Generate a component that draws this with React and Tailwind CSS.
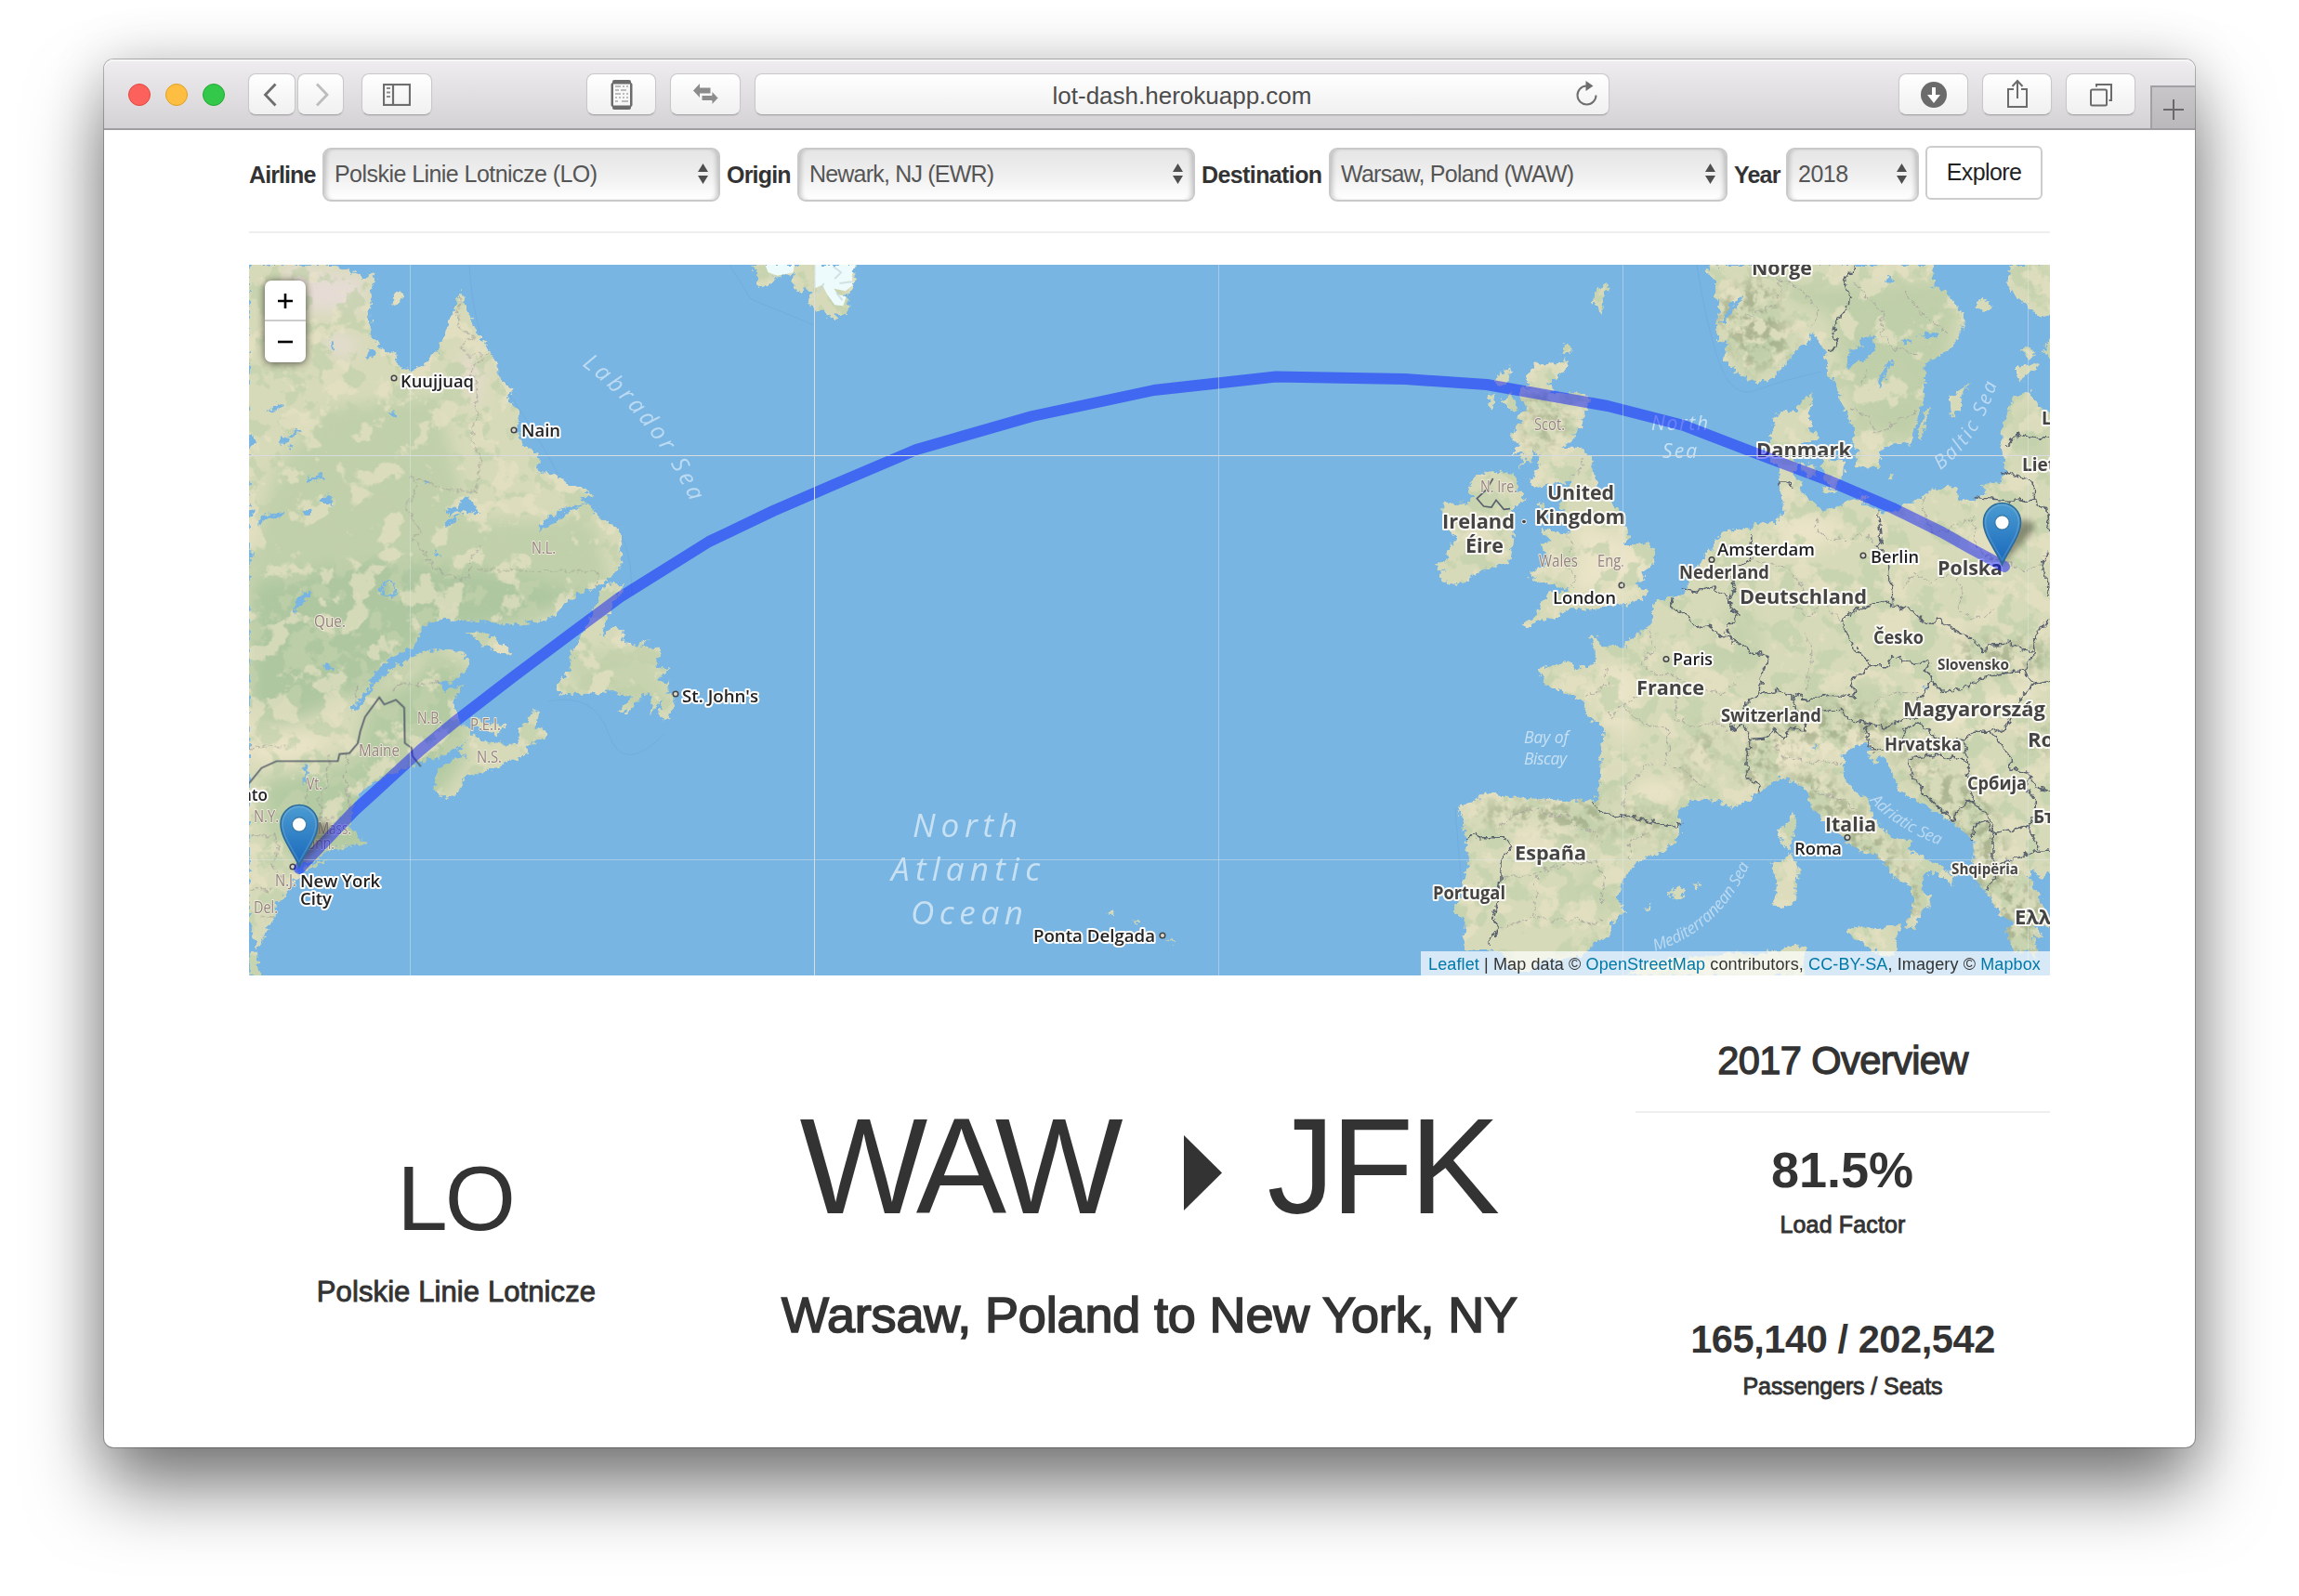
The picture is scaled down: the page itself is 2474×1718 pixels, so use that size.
import React from 'react';

const UI = 'font-["Liberation_Sans",Arial,sans-serif]';

/* ---------- Map geometry ---------- */

// North America, drawn on a 2.8 x 3 grid
const AMERICA = [
  '22,15 275,15 310,30 350,45 375,60 395,45 405,65 390,85 392,120 385,165 390,200 385,240 405,255 415,285 440,295 462,305 468,330 490,350 515,360 540,345 560,330 570,305 590,300 610,250 620,205 640,165 655,115 668,115 680,160 700,210 715,245 735,270 750,300 770,345 772,375 800,400 820,420 800,450 838,490 830,540 840,585 860,605 895,630 895,685 930,690 965,700 985,725 1020,735 1060,755 1020,775 1065,800 1070,830 1100,845 1140,865 1140,940 1150,980 1115,1020 1080,1050 1010,1080 970,1110 960,1130 915,1165 820,1177 730,1168 600,1160 545,1185 520,1245 440,1290 400,1330 385,1380 340,1440 325,1460 355,1450 400,1370 440,1330 500,1290 550,1265 620,1255 665,1265 685,1300 675,1335 630,1365 590,1355 600,1370 612,1392 665,1372 640,1430 650,1465 660,1495 690,1520 720,1550 790,1562 832,1562 835,1520 885,1450 893,1465 885,1510 920,1525 915,1545 860,1570 858,1600 760,1640 715,1658 680,1665 650,1720 612,1740 585,1715 580,1670 600,1640 640,1610 685,1600 645,1590 690,1545 650,1575 600,1605 540,1620 500,1640 440,1660 400,1690 360,1720 335,1760 330,1800 325,1830 345,1850 350,1872 370,1880 363,1855 376,1885 340,1890 310,1895 250,1910 225,1935 170,1955 165,1975 180,1990 160,2000 140,2040 120,2065 100,2080 100,2120 70,2170 50,2222 45,2220 35,2180 22,2120',
  '180,1965 260,1932 250,1950 200,1965',
  '22,2240 45,2240 50,2290 65,2312 22,2312',
  '945,1380 990,1320 995,1270 1010,1240 1040,1180 1065,1120 1080,1070 1100,1045 1160,1050 1130,1085 1115,1130 1090,1180 1085,1215 1125,1180 1150,1200 1145,1230 1190,1245 1230,1220 1200,1250 1260,1250 1265,1270 1245,1310 1290,1320 1260,1350 1280,1375 1295,1355 1280,1400 1310,1400 1290,1480 1260,1480 1265,1420 1230,1470 1240,1400 1215,1400 1160,1460 1135,1460 1180,1410 1120,1395 1060,1400 960,1400',
  '670,1197 740,1205 820,1270 780,1272 730,1245',
  '690,1475 740,1495 800,1500 780,1520 770,1535 700,1500',
  '457,145 462,110 475,100 488,120 475,140',
  '658,95 664,90 662,102',
];
const AMERICA_LAKES = [
  '620,800 650,795 680,760 700,790 718,822 680,815 650,810 620,825',
  '897,872 910,842 970,800 1060,783 1000,805 970,830 900,877',
  '197,705 245,690 242,704 200,718',
  '155,1145 165,1100 190,1075 217,1070 190,1100',
  '238,778 255,760 278,765 268,788 250,785',
  '60,825 90,820 130,812 125,828 70,838 50,855',
  '245,1300 268,1308 275,1330 250,1322',
  '22,570 35,560 45,590 22,598',
  '112,586 120,573 138,576 140,592 126,600',
  '142,602 150,594 158,602 150,611',
  '186,815 205,800 206,820 190,828',
  '190,1625 200,1625 196,1680 190,1690 188,1650',
  '265,262 272,290 280,292 276,262',
  '372,320 385,285 400,300 398,312',
  '550,715 565,708 568,722 552,722',
  '22,800 40,810 30,830 22,825',
  '78,488 100,472 126,462 118,478 90,490',
  '140,570 165,548 186,550 160,564 144,574',
  '448,482 462,498 466,512 452,500',
  '618,850 640,832 662,820 640,846 620,862',
  '575,940 590,945 596,957 582,952',
  '22,940 36,945 34,965 22,960',
];
const GREENLAND = [
  '50,15 80,30 62,48 78,62 70,80 90,90 130,70 122,60 165,50 200,45 188,65 200,95 215,105 230,90 250,110 238,140 262,160 290,165 320,190 335,185 318,170 360,178 370,160 370,130 360,110 385,95 380,75 395,60 385,40 395,15',
];
const ICE = [
  '100,15 195,15 190,40 140,50 110,40',
  '262,15 392,15 380,50 383,80 360,100 322,92 335,110 362,118 352,148 325,145 300,110 285,80 262,90',
];
// Britain and Ireland, drawn on a 3 x 3 grid
const ISLES = [
  '450,328 490,335 560,325 560,350 520,385 495,400 515,412 500,430 540,430 600,430 635,440 620,490 600,540 580,560 585,580 540,605 600,605 640,640 650,700 665,740 690,770 725,800 730,835 755,870 755,895 745,920 765,922 790,912 820,915 842,945 835,980 805,1010 810,1025 775,1050 820,1062 820,1080 755,1115 720,1112 670,1125 620,1130 600,1125 560,1130 540,1140 525,1165 490,1155 455,1170 435,1187 412,1175 450,1155 480,1100 500,1075 540,1070 580,1055 545,1060 500,1045 440,1025 440,1005 490,985 500,955 470,915 510,910 475,880 480,868 540,880 565,885 570,860 540,840 560,820 530,790 555,770 570,720 540,715 500,725 455,740 440,710 470,660 462,625 445,618 442,655 425,640 405,680 420,610 375,632 405,592 375,575 410,520 400,500 430,480 405,440 410,410 440,410 430,380 445,355',
  '335,375 380,343 375,380 345,415 328,400',
  '305,435 325,432 318,490 308,480',
  '350,455 375,430 400,480 385,490',
  '550,265 572,280 570,300 545,300',
  '645,105 662,98 690,72 692,98 672,110 680,130 665,180 660,150 642,135',
  '466,796 485,775 478,802',
  '240,740 265,695 320,680 385,690 400,715 395,740 420,760 410,785 375,810 380,840 388,900 370,980 300,995 230,1035 180,1050 140,1020 160,1005 135,985 180,960 165,945 200,910 190,880 160,860 180,835 160,820 160,785 235,785 260,765 235,745',
];
// Continental Europe, drawn on a 3 x 3 grid
const EUROPE = [
  '30,15 20,45 45,60 45,110 65,150 50,200 55,260 85,265 75,320 110,355 150,385 185,395 235,380 270,340 310,290 350,265 360,225 380,265 400,290 415,380 440,400 450,450 490,530 500,560 490,590 505,620 500,660 530,672 575,665 580,640 575,620 600,600 680,592 690,550 720,450 725,330 770,310 800,290 835,250 855,185 830,150 790,100 755,90 750,15',
  '805,440 870,400 840,440 845,470 810,510',
  '742,470 710,585 700,560 730,480',
  '605,685 628,695 620,710 606,702',
  '1000,15 990,80 1010,110 1060,150 1100,185 1135,175 1135,15',
  '882,150 905,120 942,150 915,168',
  '1030,290 1060,280 1085,300 1060,315',
  '1020,345 1090,330 1092,345 1050,370 1032,400 1020,370',
  '1115,260 1135,255 1135,320 1108,300',
  '395,640 465,650 462,690 430,742 400,712 392,670',
  '325,652 370,668 378,700 345,700 328,680',
  '390,735 450,745 430,756 395,748',
  '512,755 545,760 538,782 515,778',
  '1135,500 1090,470 1060,425 1010,440 990,500 972,540 970,600 985,680 975,715 910,720 920,745 905,765 890,775 840,775 825,740 810,730 740,745 690,780 640,800 590,815 560,800 510,775 480,775 430,800 395,812 380,790 330,760 325,720 300,690 318,660 300,640 300,620 330,590 380,580 380,560 355,550 350,500 360,460 362,430 330,450 310,485 255,490 230,520 235,550 222,580 222,650 250,660 255,700 255,750 270,790 265,825 245,835 245,860 225,845 170,850 165,865 70,875 45,905 40,945 22,925 20,950 -20,1010 -60,1080 -155,1105 -157,1180 -240,1230 -245,1250 -325,1245 -330,1218 -358,1216 -340,1260 -340,1305 -405,1315 -430,1292 -525,1320 -500,1375 -430,1400 -380,1425 -360,1480 -310,1510 -320,1560 -325,1680 -340,1745 -450,1745 -590,1735 -700,1720 -730,1745 -785,1770 -765,1820 -750,1940 -780,2070 -800,2105 -760,2130 -765,2228 -680,2225 -640,2240 -610,2290 -560,2300 -510,2265 -380,2248 -340,2200 -295,2190 -290,2140 -240,2105 -270,2060 -250,2000 -200,1940 -120,1910 -60,1850 -72,1780 -20,1740 50,1745 100,1772 150,1745 200,1715 260,1670 320,1695 345,1720 365,1780 420,1825 510,1910 560,1920 600,1950 620,1990 670,2020 690,2070 670,2120 660,2160 690,2160 715,2100 745,2085 740,2050 710,2040 720,1990 740,1975 800,2000 810,2025 820,1990 750,1940 670,1905 685,1875 620,1865 560,1810 540,1740 480,1700 460,1660 465,1630 460,1595 500,1570 540,1555 550,1580 540,1590 560,1630 580,1600 600,1605 620,1660 640,1710 700,1750 760,1780 820,1825 880,1870 880,1990 920,2040 950,2090 975,2120 1010,2135 985,2170 1010,2230 1030,2240 1060,2220 1080,2260 1090,2225 1070,2180 1110,2190 1080,2150 1128,2150 1100,2070 1060,1990 1075,1965 1095,2000 1135,1975',
  '298,1780 305,1830 285,1907 260,1880 248,1835 285,1812',
  '290,1912 318,1970 305,2070 265,2095 235,2080 247,2010 227,1945 262,1940',
  '473,2168 500,2152 570,2160 652,2145 630,2190 636,2232 600,2255 510,2200',
  '-245,2312 -160,2262 60,2245 120,2230 160,2245 270,2225 320,2210 345,2222 330,2290 345,2312',
  '-110,2045 -70,2020 -48,2035 -65,2065',
  '-30,2015 -5,2010 0,2025 -12,2025',
  '-178,2095 -158,2080 -165,2098',
];
const EUROPE_LAKES = [
  '515,250 560,245 565,285 530,330 515,320 470,350 485,290 520,282',
  '610,315 618,330 578,415 570,392 600,335',
  '600,45 628,68 605,72',
  '648,255 685,262 660,272',
  '700,240 770,232 770,248 740,252',
  '110,130 142,118 105,160 80,200 62,205 90,160',
  '365,1565 372,1565 370,1580 364,1580',
  '718,1375 728,1372 724,1385',
];

const BORDERS = [
  '495,15 485,45 462,50 470,90 480,120 478,160 440,190 430,230 437,270 425,300 415,290',
  '250,720 275,720 295,730',
  '575,815 580,870 585,910 572,925 605,960 605,1030 620,1060 620,1110',
  '450,1165 500,1130 580,1100 620,1110 690,1135 720,1170 770,1160 830,1200 900,1240 910,1262 930,1242 1000,1240 1075,1270 1040,1330 1000,1330 930,1345 890,1360 845,1385 780,1390 745,1365 730,1320 740,1295 680,1300 620,1280 610,1310 555,1310 500,1255 470,1200 455,1160',
  '970,685 1000,690 1075,715 1075,775 1115,800 1128,870',
  '890,767 950,772 1000,778 1075,775',
  '980,600 1030,565 1080,572 1128,572',
  '1128,945 1100,975 1115,1020 1120,1080',
  '1128,1155 1070,1230 1075,1270',
  '-100,1090 -90,1120 -30,1160 -5,1190 30,1180 60,1210 120,1235 160,1265 225,1280 200,1340 190,1405',
  '165,890 160,965 100,1010 110,1060 90,1100 120,1150 85,1190 90,1220 120,1235',
  '-55,1065 -20,1070 30,1055 85,1085 100,1110',
  '190,1405 240,1390 300,1405 350,1420 410,1405 500,1410 490,1355 555,1310',
  '190,1405 150,1430 130,1470 95,1515 140,1500 160,1550 210,1545 235,1510 270,1550 290,1510 340,1515 330,1480 300,1440 300,1405',
  '160,1550 150,1600 150,1670 195,1695 190,1720',
  '400,1455 455,1450 480,1485 560,1500 600,1510 650,1480 700,1480 710,1410 745,1365',
  '560,1498 530,1510 540,1540 550,1580 590,1580',
  '700,1490 655,1520 660,1560',
  '700,1490 760,1540 850,1550 880,1525 935,1525 985,1510 1000,1480 1030,1420 1080,1370 1040,1330',
  '1080,1370 1128,1360',
  '935,1525 965,1560 1000,1610 1000,1640 1060,1660 1080,1700 1128,1715',
  '820,1820 720,1720 670,1640 670,1610 760,1600 870,1620 860,1650 870,1700 880,1740 830,1770 820,1820',
  '850,1550 860,1600 870,1620',
  '880,1870 880,1830 920,1810 945,1860 945,1950 950,2000 920,2040',
  '945,1850 1000,1840 1060,1830 1085,1870 1085,1910 1020,1930 950,1950',
  '860,1740 930,1790 945,1850',
  '1060,1660 1050,1700 1085,1750 1060,1830',
  '1085,1910 1128,1905',
  '-355,1750 -325,1780 -290,1795 -210,1800 -160,1815 -100,1830 -65,1822',
  '-762,1868 -725,1850 -720,1865 -630,1865 -610,1895 -645,1940 -645,2000 -660,2090 -670,2130 -655,2155 -685,2220',
];
const REGIONS = [
  '380,830 375,870 410,900 480,905 520,880 570,925',
  '165,965 230,980 290,1000 330,1060 300,1120 350,1150 400,1110 450,1165',
  '725,760 720,830 760,880 880,830 890,930 940,960 1050,1000 1100,985',
  '650,1060 690,1010 740,1040 800,1010 850,1060 830,1130 890,1160 950,1130',
  '-160,1190 -150,1260 -190,1300 -150,1340 -90,1340 -20,1380 60,1400 110,1370',
  '-310,1320 -300,1370 -350,1400 -380,1410 M-250,1440 -200,1400 -160,1370',
  '-250,1440 -180,1500 -110,1510 -100,1580 -120,1630 -60,1640 -20,1680 20,1700',
  '-300,1460 -290,1480 -250,1440 M-250,1770 -240,1700 -180,1640 -160,1620',
  '-75,1340 -80,1480 -20,1510 50,1490 90,1520',
  '-650,1830 -600,1790 -520,1770 -480,1800 -430,1780 -410,1820 -340,1850 -320,1880',
  '-640,1995 -560,1990 -480,1960 -430,1950 -340,1940 -310,1990 -320,2080',
  '-650,2155 -580,2140 -540,2110 -500,2130 -400,2130 -350,2140 -310,2130',
  '-230,1940 -230,1880 -170,1850 M-530,1990 -530,2060 -540,2110',
  '340,1200 360,1260 350,1330 340,1390 M560,1450 570,1420 620,1400 700,1400',
  '240,1560 260,1600 340,1620 460,1625 M350,1700 400,1730 460,1740 500,1780 540,1850',
  '500,80 560,140 590,170 580,240 640,290 700,300 M240,60 320,90 380,160 360,220',
  '480,480 540,500 560,560 640,520 690,490 M150,180 200,160 250,140 260,60',
  '520,400 540,350 M660,100 720,180 800,240',
  '-370,640 -390,680 -420,700 M-430,890 -410,920 -430,960 -420,1000 -400,1030 -410,1055',
];
const AMERICA_BORDER =
  '22,1690 60,1640 105,1618 290,1618 295,1595 325,1592 350,1560 358,1520 372,1475 415,1412 430,1435 465,1420 490,1445 492,1560 512,1575 515,1602 540,1635';
const AMERICA_REGIONS = [
  '660,120 650,160 655,220 700,250 655,285 690,310 740,300 690,350 710,430 705,510 690,580 720,620 710,740 680,750 620,740 560,720 510,700 525,740 495,800 540,880 515,900 545,935 575,990 630,1025 680,1030 690,960 720,930',
  '455,1390 480,1365 540,1372 600,1360 M315,1600 315,1690 325,1780 M195,1680 200,1800 M230,1800 300,1802',
  '265,1600 260,1680 235,1740 240,1800 M35,1856 100,1860 110,1900 95,1960 130,2020 M22,2030 95,2030 M60,2125 100,2128',
  '22,1575 130,1570 M350,1380 340,1430',
];

const ROUTE =
  '2157,610 2120,590 2090,573 2037,547 1967,517 1903,493 1830,465 1812,458 1730,437 1600,414 1512,408 1373,405.5 1242,420 1111,448 986,484 899,521 832,550 763,583 667,643 617,680 553,728 492,775 453,807 403,853 381,873 322,935';

const labels = {
  city: [
    ['Kuujjuaq', 431, 416.5, 79], ['Nain', 561, 470, 42], ["St. John's", 734, 756, 82],
    ['New York', 323, 955, 86], ['City', 323, 974, 34], ['Ponta Delgada', 1112, 1013.5, 131],
    ['London', 1671, 649.5, 68], ['Amsterdam', 1848, 597.5, 105], ['Berlin', 2013, 605.5, 52],
    ['Paris', 1800, 716, 43], ['Roma', 1931, 920, 51], ['nto', 260, 861.5, 28],
  ],
  big: [
    ['United', 1665, 538, 72], ['Kingdom', 1652, 564, 97], ['Ireland', 1552, 569, 78], ['Éire', 1577, 594.5, 41],
    ['Norge', 1885, 295.5, 65], ['Danmark', 1890, 491.5, 102], ['Polska', 2085, 618.5, 70],
    ['Deutschland', 1872, 649.5, 137], ['France', 1761, 747.5, 73], ['Magyarország', 2048, 770.5, 153],
    ['España', 1630, 926, 77], ['Italia', 1964, 894.5, 55],
  ],
  mid: [
    ['Nederland', 1807, 623, 97], ['Switzerland', 1852, 776.5, 108], ['Česko', 2016, 692.5, 54],
    ['Hrvatska', 2028, 808, 83], ['Србија', 2117, 849.5, 64], ['Portugal', 1542, 968, 78],
  ],
  small: [['Slovensko', 2085, 720.5, 77], ['Shqipëria', 2100, 940.5, 72]],
  state: [
    ['N.L.', 572, 595.5, 26], ['Que.', 338, 675, 34], ['N.B.', 449, 779, 27], ['P.E.I.', 506, 785.5, 33],
    ['N.S.', 513, 820.5, 27], ['Maine', 386, 813.5, 44], ['Vt.', 330, 850, 17], ['N.Y.', 273, 884.5, 27],
    ['Mass.', 342, 898, 36], ['Conn.', 322, 914, 38], ['N.J.', 296, 954, 23], ['Del.', 273, 983, 26],
    ['N. Ire.', 1593, 530, 40], ['Scot.', 1651, 463, 33], ['Wales', 1656, 610, 42], ['Eng.', 1719, 609.5, 29],
  ],
  sea: [
    ['North', 982, 900.5, 113, 35], ['Atlantic', 959, 948, 160, 35], ['Ocean', 980, 994.5, 121, 35],
    ['North', 1777, 463, 61, 21], ['Sea', 1789, 493, 37, 21], ['Bay of', 1640, 799.5, 48, 17.5], ['Biscay', 1640, 823, 46, 17.5],
  ],
};
const cut = [['Liet', 2176, 507, 19], ['L', 2197, 457, 19], ['Ro', 2182, 804, 22], ['Бъ', 2188, 886, 19], ['Ελλ', 2168, 995, 22]];
const dots = [[424, 407], [553, 463], [727, 747], [315, 933], [1251, 1007], [1745, 630], [1842, 602.5], [2005, 598], [1793, 709.5], [1988, 901.5]];

const Polys = ({ list }) => list.map((p, i) => <polygon key={i} points={p} />);
const Lines = ({ list }) => list.map((p, i) => <path key={i} d={'M' + p} />);

const AM = 'translate(260 280) scale(0.35714 0.33333)';
const GR = 'translate(790 280) scale(0.33333)';
const UK = 'translate(1500 280) scale(0.33333)';
const EU = 'translate(1830 280) scale(0.33333)';

function Marker({ x, y }) {
  return (
    <g transform={`translate(${x} ${y})`}>
      <path d="M0,0 L30,-32 Q40,-44 28,-48 Q12,-50 4,-32 Z" fill="#2c2c1c" opacity="0.42" filter="url(#soft)" />
      <path d="M0,0 C-5,-14 -20,-30 -20,-46 A20,20.5 0 0 1 20,-46 C20,-30 5,-14 0,0 Z" fill="url(#pin)" stroke="#2e6c97" strokeWidth="1.6" />
      <path d="M0,-5 C-5,-16 -18,-32 -18,-46 A18,18.5 0 0 1 18,-46 C18,-32 5,-16 0,-5 Z" fill="none" stroke="#fff" strokeOpacity="0.14" strokeWidth="1.6" />
      <circle cy="-45.5" r="7.6" fill="#fff" stroke="#2e6c97" strokeOpacity="0.8" strokeWidth="1.2" />
    </g>
  );
}

function Label({ t, weight, size, fill, halo, sw }) {
  return (
    <text x={t[1]} y={t[2]} textLength={t[3]} lengthAdjust="spacingAndGlyphs" fontWeight={weight} fontSize={size}
      fill={fill} stroke={halo} strokeWidth={sw} strokeLinejoin="round" paintOrder="stroke">{t[0]}</text>
  );
}

function RouteMap() {
  return (
    <svg viewBox="268 285 1938 765" className="block h-[765px] w-[1938px]" fontFamily='"Open Sans","Noto Sans",sans-serif'>
      <defs>
        <linearGradient id="pin" x1="0" y1="0" x2="0" y2="1">
          <stop offset="0" stopColor="#4c9cd2" />
          <stop offset="1" stopColor="#1666bb" />
        </linearGradient>
        <filter id="soft" x="-50%" y="-50%" width="200%" height="200%"><feGaussianBlur stdDeviation="3" /></filter>
        <filter id="blur" filterUnits="userSpaceOnUse" x="200" y="200" width="2100" height="900"><feGaussianBlur stdDeviation="9" /></filter>
        <filter id="rough" filterUnits="userSpaceOnUse" x="248" y="265" width="1978" height="805" colorInterpolationFilters="sRGB">
          <feTurbulence type="fractalNoise" baseFrequency="0.17" numOctaves="3" seed="4" />
          <feDisplacementMap in="SourceGraphic" scale="10" xChannelSelector="R" yChannelSelector="G" />
        </filter>
        <filter id="wiggle" filterUnits="userSpaceOnUse" x="248" y="265" width="1978" height="805" colorInterpolationFilters="sRGB">
          <feTurbulence type="fractalNoise" baseFrequency="0.12" numOctaves="3" seed="11" />
          <feDisplacementMap in="SourceGraphic" scale="10" xChannelSelector="R" yChannelSelector="G" />
        </filter>
        <filter id="cream" filterUnits="userSpaceOnUse" x="268" y="285" width="1938" height="765" colorInterpolationFilters="sRGB">
          <feTurbulence type="fractalNoise" baseFrequency="0.032" numOctaves="5" seed="7" />
          <feColorMatrix values="0 0 0 0 0.914  0 0 0 0 0.89  0 0 0 0 0.776  14 0 0 0 -7.9" />
        </filter>
        <filter id="green" filterUnits="userSpaceOnUse" x="268" y="285" width="1938" height="765" colorInterpolationFilters="sRGB">
          <feTurbulence type="fractalNoise" baseFrequency="0.036" numOctaves="5" seed="21" />
          <feColorMatrix values="0 0 0 0 0.76  0 0 0 0 0.82  0 0 0 0 0.67  14 0 0 0 -7.3" />
        </filter>
        <filter id="hills" filterUnits="userSpaceOnUse" x="268" y="285" width="1938" height="765" colorInterpolationFilters="sRGB">
          <feTurbulence type="fractalNoise" baseFrequency="0.09" numOctaves="3" seed="33" />
          <feColorMatrix values="0 0 0 0 0.62  0 0 0 0 0.66  0 0 0 0 0.52  5 0 0 0 -2.3" />
        </filter>
        <mask id="land" maskUnits="userSpaceOnUse" x="268" y="285" width="1938" height="765">
          <g filter="url(#rough)">
            <g fill="#fff">
              <g transform={AM}><Polys list={AMERICA} /></g>
              <g transform={GR}><Polys list={GREENLAND} /></g>
              <g transform={UK}><Polys list={ISLES} /></g>
              <g transform={EU}><Polys list={EUROPE} /></g>
              <path d="M1190 983l8 -1 4 3 -8 1zM1218 990l10 2 -4 2zM1254 1011l14 3 -6 2z" />
            </g>
            <g fill="#000">
              <g transform={AM}><Polys list={AMERICA_LAKES} /></g>
              <g transform={EU}><Polys list={EUROPE_LAKES} /></g>
              <circle cx="418" cy="634" r="8" fill="none" stroke="#000" strokeWidth="2.2" />
            </g>
          </g>
        </mask>
        <mask id="range" maskUnits="userSpaceOnUse" x="268" y="285" width="1938" height="765">
          <g filter="url(#blur)" fill="#fff">
            <path d="M1880,800 L1900,770 1990,755 2040,770 2060,800 1990,800 1930,805 1895,850 1870,840 Z" />
            <path d="M1700,865 L1810,880 1790,900 1700,885 Z M2030,800 L2110,900 2140,1000 2190,1040 2200,980 2150,900 2140,850 Z" />
            <path d="M1920,830 L1960,830 2030,900 2070,960 2060,1010 2000,930 Z M1840,330 L1900,290 1930,380 1880,400 Z" />
            <path d="M2100,690 L2200,690 2206,720 2120,720 Z M2170,790 L2206,780 2206,820 Z M1570,870 L1720,860 1720,900 1600,885 Z" />
            <path d="M1640,420 L1700,430 1680,480 1640,490 Z M1830,780 L1860,790 1820,850 1800,840 Z" opacity="0.7" />
          </g>
        </mask>
        <path id="labrador" d="M626,393 Q704,452 745,544" />
        <path id="baltic" d="M2088,506 Q2130,476 2150,410" />
        <path id="med" d="M1781,1024 Q1852,1002 1884,928" />
        <path id="adria" d="M2012,862 Q2040,892 2088,910" />
      </defs>

      <rect x="268" y="285" width="1938" height="765" fill="#78b5e3" />
      <g fill="none" stroke="#6da9da" strokeWidth="1" opacity="0.6">
        <path d="M505,285 Q510,370 545,420 T600,510 T650,560 T680,640 M785,285 L808,322 876,350 M590,755 Q640,745 655,790 T715,790" />
        <path d="M1826,285 Q1836,350 1850,390 T1890,420 T1960,400 M1566,870 Q1570,920 1575,980" />
      </g>

      <g mask="url(#land)">
        <rect x="268" y="285" width="1938" height="765" fill="#d7dab9" />
        <g filter="url(#blur)">
          <path d="M350,440 L470,425 505,560 640,560 660,640 530,665 420,720 340,770 268,780 268,600 300,500 Z" fill="#c0d0aa" />
          <path d="M268,630 L400,600 560,620 640,640 560,670 450,690 400,740 300,780 268,760 Z" fill="#aec7a0" />
          <path d="M400,750 L500,710 500,820 440,900 330,940 290,900 280,840 380,820 Z M520,740 L420,760 470,700 Z" fill="#b4caa3" />
          <path d="M590,700 L700,700 730,760 640,760 Z" fill="#c6d3ae" />
          <path d="M1900,310 L2110,300 2100,370 2060,480 2000,460 1970,340 Z M1880,330 L1930,350 1900,400 1870,400 Z M2180,290 L2206,290 2206,330 Z" fill="#bfcfa9" />
          <path d="M2170,440 L2206,450 2206,520 2170,480 Z M1840,690 L1870,640 1900,690 1880,730 Z M1940,740 L2040,730 2020,770 1930,770 Z" fill="#c6d2ae" />
          <path d="M1720,820 L1760,820 1745,860 1720,860 Z M1650,860 L1720,870 1750,900 1700,900 Z M1700,930 L1740,950 1725,1000 1700,960 Z" fill="#c6d2ae" />
          <path d="M300,285 L395,300 385,335 330,335 Z M352,355 L388,370 375,385 352,375 Z" fill="#e6dcd6" />
          <path d="M490,380 L520,390 515,450 500,400 Z" fill="#e8dcd0" />
          <path d="M1690,560 L1780,590 1770,630 1690,640 1700,590 Z M1720,720 L1770,720 1750,800 1720,760 Z M1760,840 L1820,840 1800,865 1750,865 Z M1640,890 L1690,890 1680,920 1630,910 Z" fill="#ebe4c8" />
          <path d="M1900,800 L2010,790 1990,815 1900,830 Z M2080,770 L2190,730 2190,770 2100,790 Z M2080,930 L2100,950 2060,930 Z M1920,550 L1990,560 1960,590 1910,600 Z M2010,480 L2020,500 1995,500 Z M268,790 L370,790 320,820 268,820 Z" fill="#ebe4c8" />
        </g>
        <rect x="268" y="285" width="1938" height="765" filter="url(#green)" opacity="0.7" />
        <rect x="268" y="285" width="1938" height="765" filter="url(#cream)" opacity="0.65" />
        <g mask="url(#range)"><rect x="268" y="285" width="1938" height="765" filter="url(#hills)" opacity="0.75" /></g>
        <g transform={GR} fill="#edfbfd"><Polys list={ICE} /></g>
        <g transform={GR} fill="none" stroke="#c3d6d8" strokeWidth="6" opacity="0.7">
          <path d="M320,20 L345,40 325,60 M340,75 L380,70 M270,110 L290,75 M330,105 L350,130" />
        </g>
      </g>

      <g fill="none" filter="url(#wiggle)" strokeLinejoin="round">
        <g transform={EU} stroke="#a8a39f" strokeWidth="3.5" strokeDasharray="14 6" opacity="0.8"><Lines list={REGIONS} /></g>
        <g transform={AM} stroke="#a09c98" strokeWidth="3.5" strokeDasharray="14 6" opacity="0.8"><Lines list={AMERICA_REGIONS} /></g>
        <path transform={AM} d="M710,1000 L1070,1005 1072,1055" stroke="#a8b09a" strokeWidth="3.5" strokeDasharray="14 6" />
        <g transform={EU} stroke="#59616e" strokeWidth="4.6"><Lines list={BORDERS} /></g>
      </g>
      <path transform={AM} d={'M' + AMERICA_BORDER} fill="none" stroke="#59616e" strokeWidth="5" />
      <path transform={UK} d="M320,705 L300,740 268,770 290,795 315,798 330,775 355,805 375,803" fill="none" stroke="#59616e" strokeWidth="5" />

      <g fill="#d8eaf7" fillOpacity="0.82" fontStyle="italic">
        {labels.sea.map((t, i) => (
          <text key={i} x={t[1]} y={t[2]} fontSize={t[4]} textLength={t[3]}>{t[0]}</text>
        ))}
        <g fillOpacity="0.7">
          <text fontSize="25"><textPath href="#labrador" textLength="190">Labrador Sea</textPath></text>
          <text fontSize="21"><textPath href="#baltic" textLength="113">Baltic Sea</textPath></text>
          <text fontSize="17.500"><textPath href="#med" textLength="142">Mediterranean Sea</textPath></text>
          <text fontSize="17.500"><textPath href="#adria" textLength="90">Adriatic Sea</textPath></text>
        </g>
      </g>

      {labels.state.map((t) => <Label key={t[0]} t={t} size={17.5} weight={400} fill="#93827b" halo="#efebde" sw={1.8} />)}
      {labels.city.map((t) => <Label key={t[0]} t={t} size={18.8} weight={600} fill="#222" halo="#fff" sw={4} />)}
      {labels.big.map((t) => <Label key={t[0]} t={t} size={22} weight={700} fill="#444" halo="#fbfaf4" sw={4} />)}
      {labels.mid.map((t) => <Label key={t[0]} t={t} size={18.8} weight={700} fill="#444" halo="#fbfaf4" sw={4} />)}
      {labels.small.map((t) => <Label key={t[0]} t={t} size={16} weight={700} fill="#444" halo="#fbfaf4" sw={3.6} />)}
      {cut.map((t) => (
        <text key={t[0]} x={t[1]} y={t[2]} fontSize={t[3]} fontWeight="700" fill="#444" stroke="#fbfaf4" strokeWidth="4" strokeLinejoin="round" paintOrder="stroke">{t[0]}</text>
      ))}
      {dots.map(([x, y]) => <circle key={x} cx={x} cy={y} r="2.8" fill="#d9d9d0" stroke="#444" strokeWidth="1.5" />)}
      <circle cx="1640" cy="561.5" r="2.4" fill="#444" stroke="#fff" strokeWidth="1" />

      <polyline points={ROUTE} fill="none" stroke="rgb(0,12,255)" strokeOpacity="0.46" strokeWidth="12" strokeLinecap="round" strokeLinejoin="round" />

      <path d="M441.5,285V1050 M1311.5,285V1050 M1746.5,285V1050 M2182.5,285V1050 M268,925.5H2206" stroke="#dfe8ec" strokeOpacity="0.45" />
      <path d="M876.5,285V1050 M268,490.5H2206" stroke="#d9dde0" />
      <Marker x={322} y={933} />
      <Marker x={2154.5} y={608} />
    </svg>
  );
}

/* ---------- Browser chrome ---------- */

const BTN = 'flex h-[45px] shrink-0 items-center justify-center rounded-[8px] border border-[#c9c7ca] border-b-[#a9a7aa] bg-gradient-to-b from-white to-[#f1f0f1] shadow-[0_1px_1px_rgba(0,0,0,0.08)]';

function Toolbar() {
  return (
    <header className="flex h-[76px] items-start rounded-t-[10px] border-b-2 border-[#a19ea3] bg-gradient-to-b from-[#efedf0] to-[#d4d2d5] pt-[15px] shadow-[inset_0_2px_0_#f7f6f7]">
      <div className="ml-[26px] flex h-[45px] items-center gap-4">
        <span className="size-6 rounded-full border border-[#e2463f] bg-[#fc615c]" />
        <span className="size-6 rounded-full border border-[#dfa023] bg-[#fdbe41]" />
        <span className="size-6 rounded-full border border-[#1fa934] bg-[#34c84a]" />
      </div>
      <div className="ml-[25px] flex gap-0.5">
        <div className={`${BTN} w-[51px]`}>
          <svg className="size-7" viewBox="0 0 28 28" fill="none" stroke="#6e6e6e" strokeWidth="2.8"><path d="M17.5 2.500 6.500 14l11 11.500" /></svg>
        </div>
        <div className={`${BTN} w-[50px]`}>
          <svg className="size-7" viewBox="0 0 28 28" fill="none" stroke="#bdbdbd" strokeWidth="2.8"><path d="M10 2.500 21 14 10 25.500" /></svg>
        </div>
      </div>
      <div className={`${BTN} ml-[19px] w-[76px]`}>
        <svg className="h-6 w-[30px]" viewBox="0 0 30 24" fill="none" stroke="#6e6e6e" strokeWidth="2.200">
          <rect x="1" y="1" width="28" height="22" /><path d="M11 1v22" /><path d="M4 5h4M4 9.500h4M4 14h4" strokeWidth="1.800" stroke="#8c8c8c" />
        </svg>
      </div>
      <div className={`${BTN} ml-[166px] w-[75px]`}>
        <svg className="h-8 w-6" viewBox="0 0 24 32" fill="none">
          <rect x="2" y="0" width="20" height="32" rx="2" fill="#6b6b6b" /><rect x="0.500" y="3" width="23" height="26" rx="2" fill="#6b6b6b" />
          <rect x="3" y="4.500" width="18" height="23" fill="#f7f7f7" />
          <path d="M5 7h6m2 0h2m2 0h2M5 11h4m2 0h6M5 15h6m2 0h2m2 0h2M5 19h2m2 0h2m2 0h2m2 0h2M5 23h3m4 0h7" stroke="#bcbcbc" strokeWidth="1.800" />
        </svg>
      </div>
      <div className={`${BTN} ml-[15px] w-[76px]`}>
        <svg className="h-[23px] w-[27px]" viewBox="0 0 27 23" fill="#8c8c8c">
          <path d="M0 7.500 7 0v4.500h11.500v6H7V15z" /><path d="M27 15.500 20 8v4.500H9v6h11V23z" stroke="#f8f8f8" strokeWidth="1" />
        </svg>
      </div>
      <div className={`${BTN} relative ml-[15px] w-[920px] text-[26px] text-[#4c4c4c]`}>
        <span className="mt-[3px]">lot-dash.herokuapp.com</span>
        <svg className="absolute right-[12px] top-[7px] h-[27px] w-[24px]" viewBox="0 0 24 27" fill="none" stroke="#6e6e6e" strokeWidth="2">
          <path d="M12 5.500A10 10 0 1 0 22.500 15.500" /><path d="M11.500 0v11l8-5.500z" fill="#6e6e6e" stroke="none" />
        </svg>
      </div>
      <div className="ml-auto flex gap-[15px]">
        <div className={`${BTN} w-[75px]`}>
          <svg className="size-7" viewBox="0 0 28 28"><circle cx="14" cy="14" r="14" fill="#6b6b6b" /><path d="M12 6h4v8h5l-7 9-7-9h5z" fill="#fff" /></svg>
        </div>
        <div className={`${BTN} w-[75px]`}>
          <svg className="-mt-[3px] h-[31px] w-[24px]" viewBox="0 0 24 31" fill="none" stroke="#6b6b6b" strokeWidth="2"><path d="M8 11H2v19h20V11h-6" /><path d="M12 21V2M6.500 8 12 2l5.500 6" /></svg>
        </div>
        <div className={`${BTN} w-[75px]`}>
          <svg className="size-[26px]" viewBox="0 0 26 26" fill="none" stroke="#6b6b6b" strokeWidth="2"><rect x="2" y="7.500" width="17" height="17" rx="1.500" /><path d="M8 4.500V2h16v17h-2.500" /></svg>
        </div>
      </div>
      <div className="ml-4 mt-[13px] flex h-[46px] w-12 items-center justify-center border-l-2 border-t-2 border-[#a3a0a5] bg-gradient-to-b from-[#c8c6c9] to-[#bab8bb]">
        <svg className="mt-1 size-[22px]" viewBox="0 0 22 22" stroke="#6a686b" strokeWidth="2"><path d="M11 0v22M0 11h22" /></svg>
      </div>
    </header>
  );
}

/* ---------- Page ---------- */

function Select({ children, className }) {
  return (
    <div className={`mt-0.5 flex h-[58px] shrink-0 items-center justify-between rounded-[9px] border-2 border-[#c9c9c9] bg-gradient-to-b from-[#e5e5e5] via-[#efefef] to-white pl-[11px] pr-[11px] text-[25px] text-[#555] shadow-[inset_5px_0_5px_-3px_rgba(0,0,0,0.2),inset_-5px_0_5px_-3px_rgba(0,0,0,0.2)] ${className}`}>
      <span className="-mt-px whitespace-nowrap">{children}</span>
      <svg className="-mt-[3px] h-[22px] w-[11px]" viewBox="0 0 11 22" fill="#4f4f4f"><path d="M5.500 0 11 9H0zM5.500 22 11 13H0z" /></svg>
    </div>
  );
}

const FLABEL = 'flex h-[64px] shrink-0 items-center whitespace-nowrap text-[25px] font-bold text-[#333]';
const MEDIUM = '[-webkit-text-stroke:0.9px_#333]';

export default function App() {
  return (
    <div className={`${UI} h-[1718px] w-[2474px] overflow-hidden bg-white pt-16`}>
      <div className="ml-28 h-[1494px] w-[2250px] rounded-[10px] bg-white shadow-[0_0_0_1px_rgba(0,0,0,0.25),0_0_60px_rgba(0,0,0,0.16),0_44px_80px_rgba(0,0,0,0.5)]">
        <Toolbar />
        <main className="ml-[156px] w-[1938px]">
          <form className="flex h-[109px] items-start pt-[17px]">
            <span className={`${FLABEL} w-[79px] tracking-[-0.9px]`}>Airline</span>
            <Select className="w-[428px] tracking-[-0.55px]">Polskie Linie Lotnicze (LO)</Select>
            <span className={`${FLABEL} ml-[7px] w-[76px] tracking-[-0.8px]`}>Origin</span>
            <Select className="w-[428px] tracking-[-0.8px]">Newark, NJ (EWR)</Select>
            <span className={`${FLABEL} ml-[7px] w-[137px] tracking-[-0.6px]`}>Destination</span>
            <Select className="w-[429px] tracking-[-0.75px]">Warsaw, Poland (WAW)</Select>
            <span className={`${FLABEL} ml-[7px] w-[56px] tracking-[-0.8px]`}>Year</span>
            <Select className="w-[143px] tracking-[-0.5px]">2018</Select>
            <div className="ml-[7px] flex h-[58px] w-[126px] items-center justify-center rounded-[6px] border-2 border-[#ccc] bg-white pb-px text-[25px] tracking-[-0.6px] text-[#222]">Explore</div>
          </form>
          <hr className="mb-[34px] border-0 border-t-2 border-[#eee]" />

          <section className="relative h-[765px] w-[1938px] overflow-hidden">
            <RouteMap />
            <div className="absolute left-[17px] top-[17px] flex h-[88px] w-[44px] flex-col rounded-[7px] bg-white shadow-[0_1px_9px_rgba(0,0,0,0.65)]">
              <div className="flex h-[44px] items-center justify-center border-b-2 border-[#ccc]">
                <svg className="mt-0.5 size-4" viewBox="0 0 16 16" stroke="#000" strokeWidth="2.600"><path d="M8 0v16M0 8h16" /></svg>
              </div>
              <div className="flex flex-1 items-center justify-center">
                <svg className="size-4" viewBox="0 0 16 16" stroke="#000" strokeWidth="2.600"><path d="M0 8h16" /></svg>
              </div>
            </div>
            <div className="absolute bottom-0 right-0 h-[26px] w-[677px] whitespace-nowrap bg-white/70 pl-2 text-[18px] leading-[28px] tracking-[0.12px] text-[#333]">
              <span className="text-[#0078a8]">Leaflet</span> | Map data © <span className="text-[#0078a8]">OpenStreetMap</span> contributors, <span className="text-[#0078a8]">CC-BY-SA</span>, Imagery © <span className="text-[#0078a8]">Mapbox</span>
            </div>
          </section>

          <section className="flex text-center text-[#333]">
            <div className="w-[446px] pt-[190px]">
              <div className="h-[100px] pr-[3px] text-[98px] leading-[100px] tracking-[-3px]">LO</div>
              <div className={`${MEDIUM} mt-[31px] text-[31px] leading-10 tracking-[0.1px]`}>Polskie Linie Lotnicze</div>
            </div>
            <div className="w-[1046px] pt-[126px]">
              <div className="flex h-[160px] items-center justify-center pr-1 text-[146px] leading-[160px] tracking-[-7px]">
                <span>WAW</span>
                <svg className="ml-[72px] mr-[49px] mt-[12px] h-[81px] w-[41px]" viewBox="0 0 41 81" fill="#333"><path d="M0 0 41 40.500 0 81z" /></svg>
                <span className="tracking-[-4.5px]">JFK</span>
              </div>
              <div className="mt-[49px] text-[54px] leading-[60px] tracking-[-0.15px] [-webkit-text-stroke:1.7px_#333]">Warsaw, Poland to New York, NY</div>
            </div>
            <div className="w-[446px] pt-[68px]">
              <div className="text-[41.6px] leading-[48px] tracking-[-0.6px] [-webkit-text-stroke:1.3px_#333]">2017 Overview</div>
              <hr className="mt-[30px] border-0 border-t-2 border-[#eee]" />
              <div className="mt-[31px] pr-px text-[54px] font-bold leading-[60px]">81.5%</div>
              <div className={`${MEDIUM} mt-[14px] text-[25px] leading-[30px] tracking-[0.15px]`}>Load Factor</div>
              <div className="mt-[85px] text-[41.6px] font-bold leading-[48px] tracking-[-0.45px]">165,140 / 202,542</div>
              <div className={`${MEDIUM} mt-[11px] text-[25px] leading-[30px] tracking-[-0.1px]`}>Passengers / Seats</div>
            </div>
          </section>
        </main>
      </div>
    </div>
  );
}
